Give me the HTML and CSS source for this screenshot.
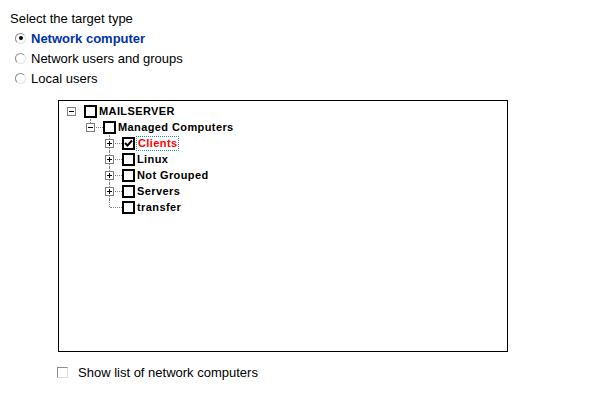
FILE: index.html
```html
<!DOCTYPE html>
<html lang="en">
<head>
  <meta charset="UTF-8" />
  <title>Select target type</title>
  <link rel="stylesheet" href="styles.css">
</head>
<body>
  <div class="page">
    <p class="title">Select the target type</p>

    <div class="choices">
      <label class="choice selected"><span class="radio on"></span>Network computer</label>
      <label class="choice"><span class="radio"></span>Network users and groups</label>
      <label class="choice"><span class="radio"></span>Local users</label>
    </div>

    <ul class="tree">
      <li class="node lvl0">
        <span class="joint root"><span class="twisty minus"></span></span>
        <span class="check"></span><span class="label">MAILSERVER</span>
      </li>
      <li class="node lvl1">
        <span class="joint last"><span class="twisty minus"></span></span>
        <span class="check"></span><span class="label">Managed Computers</span>
      </li>
      <li class="node lvl2">
        <span class="joint"><span class="twisty plus"></span></span>
        <span class="check checked">
          <svg width="9" height="9" viewBox="0 0 9 9"><polyline points="1,4 3.5,6.5 8,1.5" fill="none" stroke="#000" stroke-width="2"/></svg>
        </span><span class="label focus">Clients</span>
      </li>
      <li class="node lvl2">
        <span class="joint"><span class="twisty plus"></span></span>
        <span class="check"></span><span class="label">Linux</span>
      </li>
      <li class="node lvl2">
        <span class="joint"><span class="twisty plus"></span></span>
        <span class="check"></span><span class="label">Not Grouped</span>
      </li>
      <li class="node lvl2">
        <span class="joint"><span class="twisty plus"></span></span>
        <span class="check"></span><span class="label">Servers</span>
      </li>
      <li class="node lvl2">
        <span class="joint last leaf"></span>
        <span class="check"></span><span class="label">transfer</span>
      </li>
    </ul>

    <label class="show-list"><span class="flat-check"></span>Show list of network computers</label>
  </div>
</body>
</html>
```

FILE: styles.css
```css
body {
  margin: 0;
  background: #ffffff;
  font-family: "Liberation Sans", Arial, sans-serif;
  font-size: 13px;
  color: #000;
}
.page {
  padding: 11px 0 0 10px;
}
.title {
  margin: 0 0 2px 0;
  line-height: 15px;
}
.choice {
  display: flex;
  align-items: center;
  height: 20px;
  padding-left: 5px;
}
.choice.selected {
  font-weight: bold;
  color: #0033a8;
}
.radio {
  width: 11px;
  height: 11px;
  box-sizing: border-box;
  border: 1px solid;
  border-color: #8c8c8c #e2e2e2 #e2e2e2 #8c8c8c;
  border-radius: 50%;
  background: #fff;
  margin-right: 5px;
  position: relative;
}
.radio.on::after {
  content: "";
  position: absolute;
  left: 2.5px;
  top: 2.5px;
  width: 4px;
  height: 4px;
  border-radius: 50%;
  background: #000;
}
.tree {
  list-style: none;
  margin: 12px 0 0 48px;
  padding: 2px 0 0 0;
  width: 448px;
  height: 248px;
  border: 1px solid #000;
  font-size: 11px;
  font-weight: bold;
  letter-spacing: 0.4px;
}
.node {
  display: flex;
  align-items: center;
  height: 16px;
}
.lvl0 { padding-left: 8px; }
.lvl1 { padding-left: 27px; }
.lvl2 { padding-left: 46px; }
.joint {
  position: relative;
  flex: none;
  width: 17px;
  height: 16px;
}
.joint::before {
  content: "";
  position: absolute;
  left: 4px;
  top: 0;
  height: 16px;
  border-left: 1px dotted #808080;
}
.joint.last::before {
  height: 8px;
}
.joint::after {
  content: "";
  position: absolute;
  left: 5px;
  top: 8px;
  width: 12px;
  border-top: 1px dotted #808080;
}
.joint.root::before,
.joint.root::after {
  display: none;
}
.twisty {
  position: absolute;
  z-index: 1;
  left: 0;
  top: 4px;
  width: 7px;
  height: 7px;
  border: 1px solid #808080;
  background: #fff;
}
.twisty::before {
  content: "";
  position: absolute;
  left: 1px;
  top: 3px;
  width: 5px;
  height: 1px;
  background: #000;
}
.twisty.plus::after {
  content: "";
  position: absolute;
  left: 3px;
  top: 1px;
  width: 1px;
  height: 5px;
  background: #000;
}
.check {
  flex: none;
  width: 13px;
  height: 13px;
  box-sizing: border-box;
  border: 2px solid #000;
  background: #fff;
  margin-right: 2px;
  display: flex;
  align-items: center;
  justify-content: center;
}
.label {
  line-height: 13px;
  white-space: nowrap;
}
.label.focus {
  color: #ff0000;
  margin-left: -1px;
  padding: 0 1px;
  border: 1px dotted #1a9aa4;
}
.show-list {
  display: flex;
  align-items: center;
  height: 20px;
  margin: 10px 0 0 47px;
}
.flat-check {
  width: 11px;
  height: 11px;
  box-sizing: border-box;
  border: 1px solid;
  border-color: #8c8c8c #dcdcdc #dcdcdc #8c8c8c;
  background: #fff;
  margin-right: 10px;
}
```
